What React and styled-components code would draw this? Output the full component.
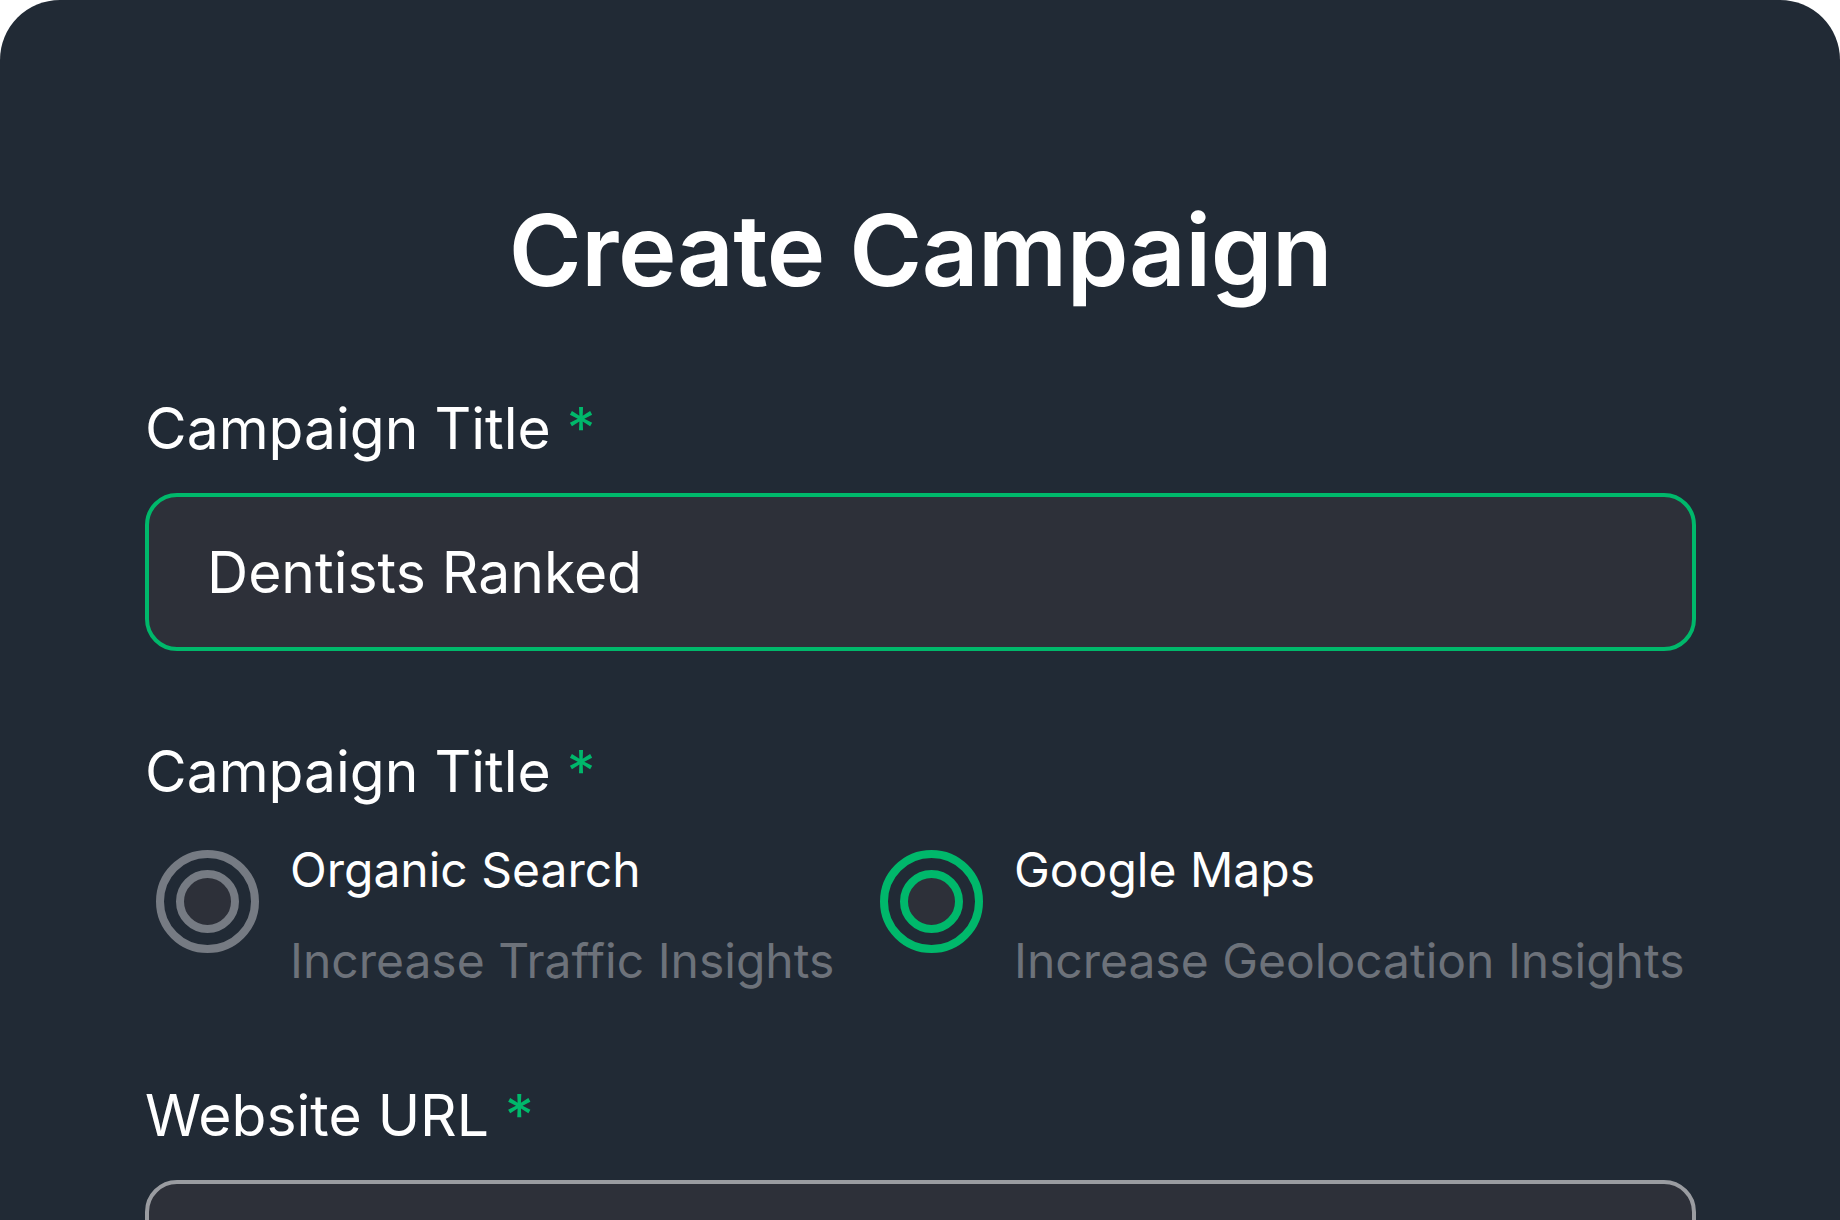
import React from "react";
import styled, { createGlobalStyle } from "styled-components";

const GlobalStyle = createGlobalStyle`
  html, body {
    margin: 0;
    padding: 0;
    background: #ffffff;
  }
  body {
    font-family: Inter, "Noto Sans", "Liberation Sans", sans-serif;
  }
`;

const Card = styled.div`
  box-sizing: border-box;
  width: 1840px;
  height: 1220px;
  overflow: hidden;
  background: #212a35;
  border-radius: 60px 60px 0 0;
  padding: 201px 144px 0 145px;
  color: #ffffff;
`;

const Title = styled.h1`
  margin: 0 0 100px;
  font-size: 99px;
  line-height: 1;
  font-weight: 600;
  text-align: center;
  letter-spacing: -0.5px;
`;

const Field = styled.div`
  display: flex;
  flex-direction: column;
  gap: 36px;
  margin-bottom: ${(p) => p.$spacing || 0}px;
`;

const Label = styled.label`
  display: block;
  font-size: 57px;
  line-height: 1;
  font-weight: 400;
  color: #ffffff;
  white-space: nowrap;

  span {
    color: #00b86b;
    margin-left: 16px;
  }
`;

const Input = styled.div`
  box-sizing: border-box;
  height: 158px;
  display: flex;
  align-items: center;
  padding: 0 58px;
  background: #2d3039;
  border: 4px solid ${(p) => (p.$active ? "#00b86b" : "#9a9ca1")};
  border-radius: 32px;
  font-size: 57px;
  line-height: 1;
  color: #ffffff;
`;

const Options = styled.div`
  display: grid;
  grid-template-columns: 724px 1fr;
  margin-top: 10px;
`;

const Option = styled.div`
  display: flex;
  align-items: flex-start;
  gap: 31px;
  padding-left: 11px;
`;

const Radio = styled.span`
  box-sizing: border-box;
  flex: none;
  width: 103px;
  height: 103px;
  margin-top: 4px;
  border-radius: 50%;
  border: 8px solid ${(p) => (p.$checked ? "#00b86b" : "#767b83")};
  display: grid;
  place-items: center;

  &::after {
    content: "";
    box-sizing: border-box;
    width: 63px;
    height: 63px;
    border-radius: 50%;
    border: 8px solid ${(p) => (p.$checked ? "#00b86b" : "#767b83")};
    background: #2d3039;
  }
`;

const OptionText = styled.div`
  display: flex;
  flex-direction: column;
  gap: 43px;
  white-space: nowrap;
`;

const OptionTitle = styled.div`
  font-size: 48px;
  line-height: 1;
  color: #ffffff;
`;

const OptionHint = styled.div`
  font-size: 48px;
  line-height: 1;
  color: #6d727a;
`;

const campaignTypes = [
  { title: "Organic Search", hint: "Increase Traffic Insights", checked: false },
  { title: "Google Maps", hint: "Increase Geolocation Insights", checked: true },
];

export default function App() {
  return (
    <>
      <GlobalStyle />
      <Card>
        <Title>Create Campaign</Title>

        <Field $spacing={92}>
          <Label>
            Campaign Title<span>*</span>
          </Label>
          <Input $active>Dentists Ranked</Input>
        </Field>

        <Field $spacing={102}>
          <Label>
            Campaign Title<span>*</span>
          </Label>
          <Options>
            {campaignTypes.map((t) => (
              <Option key={t.title}>
                <Radio $checked={t.checked} />
                <OptionText>
                  <OptionTitle>{t.title}</OptionTitle>
                  <OptionHint>{t.hint}</OptionHint>
                </OptionText>
              </Option>
            ))}
          </Options>
        </Field>

        <Field>
          <Label>
            Website URL<span>*</span>
          </Label>
          <Input />
        </Field>
      </Card>
    </>
  );
}
